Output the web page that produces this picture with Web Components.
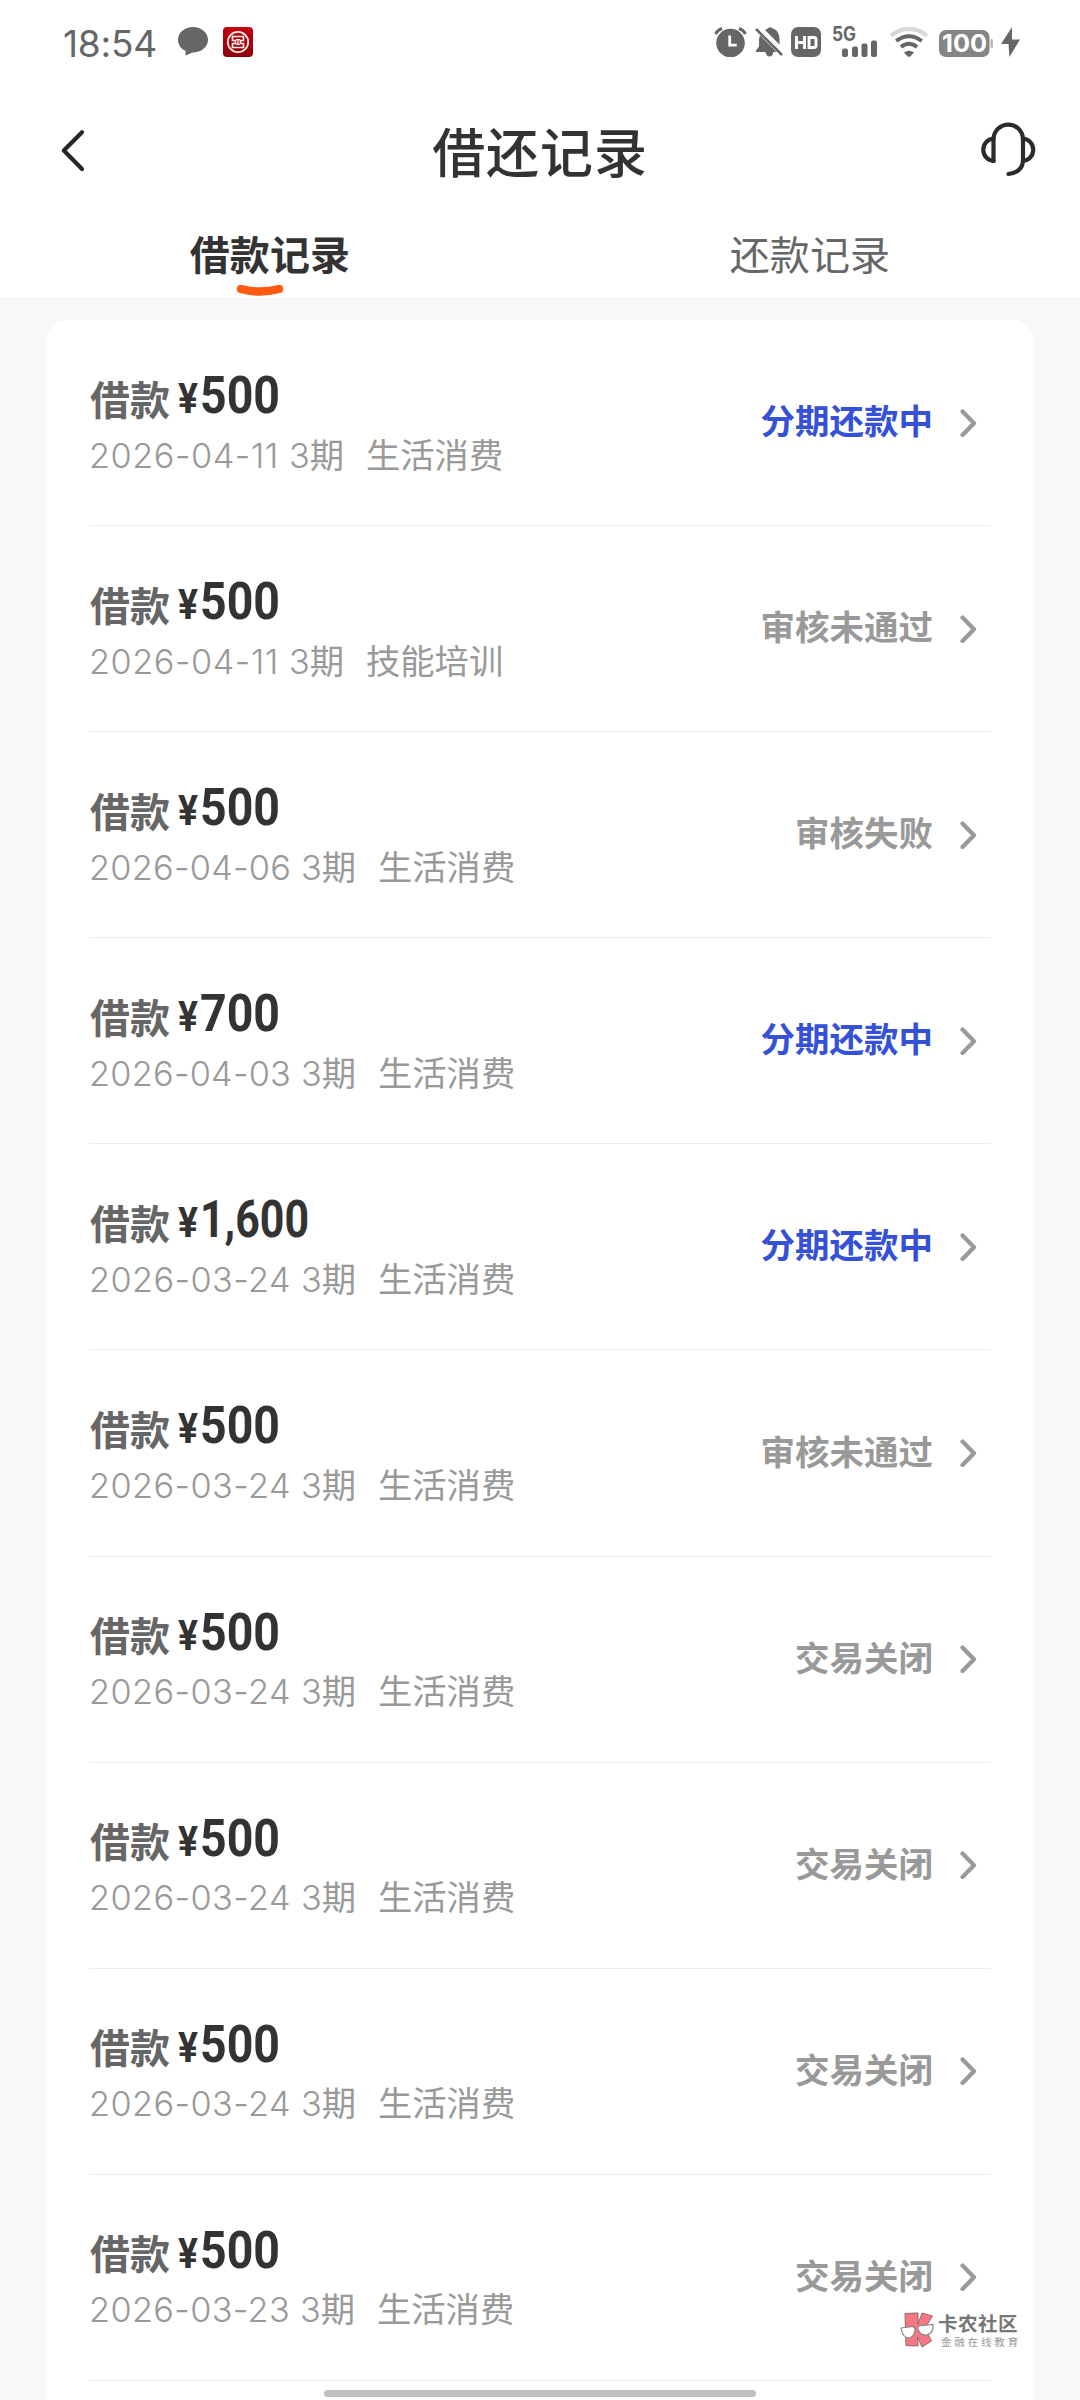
<!DOCTYPE html>
<html lang="zh-CN">
<head>
<meta charset="utf-8">
<title>借还记录</title>
<style>
html,body{margin:0;padding:0}
body{width:1080px;height:2400px;overflow:hidden;background:#f8f8f8;font-family:"Noto Sans CJK SC",sans-serif}
</style>
</head>
<body>
<loan-app></loan-app>
<script>
const define = (name, html, ready) => customElements.define(name, class extends HTMLElement {
  connectedCallback() {
    if (this.shadowRoot) return;
    const root = this.attachShadow({mode: 'open'});
    root.innerHTML = typeof html === 'function' ? html(this) : html;
    if (ready) ready(root, this);
  }
});

// Adjust letter spacing so that each [data-fit] run takes its nominal width.
const fit = root => root.querySelectorAll('[data-fit]').forEach(el => {
  const w = el.getBoundingClientRect().width;
  el.style.letterSpacing = ((+el.dataset.fit - w) / el.textContent.length) + 'px';
});

define('status-bar', `
<style>
:host{display:flex;justify-content:space-between;align-items:flex-start;height:84px;padding:27px 60px 0 63px;box-sizing:border-box;color:#666}
.l,.r{display:flex;align-items:flex-start}
.time{font:400 37px/34px Inter,sans-serif;white-space:nowrap;width:115px}
svg{display:block;flex:none}
</style>
<div class="l"><span class="time"><span data-fit="94">18:54</span></span>
<svg width="30" height="30" viewBox="0 0 30 30"><path fill="#666" d="M15 0C6.7 0 0 5.600 0 12.800 0 18 3 21.700 7.500 23.800L7.500 28.500 14.500 25.600C23.300 25.600 30 20 30 12.800 30 5.600 23.300 0 15 0Z"/></svg>
<svg style="margin-left:15px" width="30" height="30" viewBox="0 0 30 30"><defs><linearGradient id="g" x2="0" y2="1"><stop stop-color="#c40012"/><stop offset="1" stop-color="#8f000b"/></linearGradient></defs><rect width="30" height="30" rx="4" fill="url(#g)"/><circle cx="15" cy="15" r="10.200" fill="none" stroke="#ffeee6" stroke-width="1.800"/><path d="M9.500 9.500h11v4h-3v3h3v4h-11v-4h3v-3h-3Z" fill="none" stroke="#ffeee6" stroke-width="1.700"/><path d="M15 12.500v5M13 12.700h4M13 17.300h4" stroke="#ffeee6" stroke-width="1.300"/></svg></div>
<div class="r">
<svg width="33" height="30" viewBox="0 0 33 30"><circle cx="16.500" cy="16" r="14.300" fill="#666"/><path d="M1.500 7Q3.500 3 8 1.500M25 1.500Q29.500 3 31.500 7" fill="none" stroke="#666" stroke-width="3"/><path d="M15.700 8.500v9.700h7" fill="none" stroke="#fff" stroke-width="2.800"/></svg>
<svg style="margin-left:8px" width="30" height="30" viewBox="0 0 30 30"><path fill="#666" d="M11 2.500 15 0 18 1.500Q24.500 4 24.500 12V17.500L10 3ZM5 8.300 21.500 25H18.500Q17.500 29.500 14.500 29.500T10.500 25H1V23.500L4 19.500V12Z"/><path d="M1 2 27 28" stroke="#666" stroke-width="2.600"/></svg>
<svg style="margin-left:6px" width="30" height="30" viewBox="0 0 30 30"><rect width="30" height="30" rx="7" fill="#666"/><path d="M5.500 9v13M13.500 9v13M5.500 15.500h8M18 10.500h5Q25 10.500 25 12.500v6Q25 20.500 23 20.500h-5Z" fill="none" stroke="#fff" stroke-width="2.900"/></svg>
<svg style="margin-left:11px" width="45" height="30" viewBox="0 0 45 30" overflow="visible"><text x="0" y="14.300" font-family="Inter,sans-serif" font-weight="700" font-size="19.500" textLength="24" lengthAdjust="spacingAndGlyphs" fill="#666">5G</text><g fill="#666"><rect x="10" y="21.500" width="6" height="8.500" rx="2"/><rect x="20" y="19.500" width="6" height="10.500" rx="2"/><rect x="29.500" y="16.500" width="6" height="13.500" rx="2"/><rect x="39" y="13.500" width="6" height="16.500" rx="2"/></g></svg>
<svg style="margin-left:13px" width="38" height="30" viewBox="0 0 38 30"><g fill="none"><path d="M1 8.500Q19-5 37 8.500" stroke="#d9d9d9" stroke-width="4.500"/><path d="M6.200 14Q19 4.500 31.800 14" stroke="#666" stroke-width="4"/><path d="M11 20Q19 13.500 27 20" stroke="#666" stroke-width="4"/></g><path d="M14 25.500Q19 22 24 25.500L20.500 29.300Q19 30.300 17.500 29.300Z" fill="#666"/></svg>
<svg style="margin-left:11px" width="54" height="30" viewBox="0 0 54 30"><rect y="3" width="50.500" height="27" rx="7" fill="#858585"/><path d="M51.500 12h1.300q1.200 0 1.200 1.500v6q0 1.500-1.200 1.500h-1.300Z" fill="#b8b8b8"/><text x="3" y="25" font-family="Inter,sans-serif" font-weight="700" font-size="24.500" textLength="45" lengthAdjust="spacingAndGlyphs" fill="#fff">100</text></svg>
<svg style="margin-left:8px" width="19" height="30" viewBox="0 0 19 30"><path fill="#666" d="M11 0 0 17h7.500L8.500 30 19 12.500H11Z"/></svg>
</div>`, fit);

define('nav-bar', `
<style>
:host{display:grid;grid-template-columns:160px 1fr 160px;align-items:center;height:132px}
svg{display:block}
.back{padding-left:59px}.help{padding-left:60px}
h1{margin:0;font:500 53px/80px "Noto Sans CJK SC",sans-serif;letter-spacing:.9px;text-align:center;color:#333}
</style>
<svg class="back" width="28" height="48" viewBox="0 0 28 48"><path d="M23 6.300 4.800 24.500 23 43" fill="none" stroke="#262626" stroke-width="4.200" stroke-linecap="round" stroke-linejoin="round"/></svg>
<h1><slot></slot></h1>
<svg class="help" width="58" height="58" viewBox="0 0 58 58"><g fill="none" stroke="#2b2b2b" stroke-width="4.200" stroke-linecap="round" stroke-linejoin="round"><path d="M13.500 40V17.500A14.800 15.200 0 0 1 43 17.500V40Q42 51.500 28.500 53"/><path d="M13.500 17.500A11.300 11.300 0 0 0 13.500 40M43 17.500A11.300 11.300 0 0 1 43 40"/></g></svg>`);

define('record-tab', `
<style>
:host{display:flex;flex:1;flex-direction:column;align-items:center;color:#666;font:400 40px/60px "Noto Sans CJK SC",sans-serif}
:host([active]){color:#333;font-weight:700}
svg{display:none;margin:1px 20px 0 0}
:host([active]) svg{display:block}
</style><span data-fit="160.500"></span><svg width="48" height="13" viewBox="0 0 48 13"><path d="M5 5Q24 10 43 5" fill="none" stroke="#ff5a10" stroke-width="8.500" stroke-linecap="round"/></svg>`,
(r, h) => { r.querySelector('span').textContent = h.getAttribute('label'); fit(r); });

define('tab-strip', `<style>:host{display:flex;height:81px;padding-top:7px;box-sizing:border-box}</style><slot></slot>`);

define('loan-row', h => {
  const a = n => h.getAttribute(n);
  return `
<style>
:host{display:flex;justify-content:space-between;height:206.100px;box-sizing:border-box;border-bottom:1.500px solid #ececec}
.info{padding-top:42.500px}
.top{display:flex;align-items:baseline;height:70px;padding-left:1px;line-height:70px;white-space:nowrap}
.kind{font-size:40px;font-weight:700;color:#666;width:88px}
.yen,.amt{color:#333;font-family:Roboto,sans-serif;font-weight:700;position:relative;top:-1.500px}
.yen{font-size:42px;width:22px}.amt{font-size:52px}
.yen span,.amt span{display:inline-block;transform-origin:0 50%}
.sub{display:flex;align-items:baseline;height:50px;line-height:50px;margin-top:-5px;color:#999;font-size:34.300px;white-space:nowrap}
.date,.n{font-family:Inter,"Noto Sans CJK SC",sans-serif;font-weight:350;white-space:pre}
.term{width:77px}
.end{display:flex;align-items:center;padding-right:14px;gap:27px}
.state{font-size:34.500px;font-weight:700;line-height:50px;color:#999;margin-top:-7px}
.state.on{color:#3551d8}
svg{display:block}
</style>
<div class="info"><div class="top"><span class="kind">借款</span><span class="yen"><span data-wide="20">¥</span></span><span class="amt"><span data-wide="${a('amount').length > 3 ? 109 : 80}">${a('amount')}</span></span></div>
<div class="sub"><span class="date" data-fit="${a('dw') || 212}">${a('date')} </span><span class="term"><span class="n">3</span>期</span><span>${a('use')}</span></div></div>
<div class="end"><span class="state ${a('state') === '分期还款中' ? 'on' : ''}">${a('state')}</span><svg width="17" height="28" viewBox="0 0 17 28"><path d="M2.500 2.500 14 14.300 2.500 26" fill="none" stroke="#999" stroke-width="4.200" stroke-linecap="round" stroke-linejoin="round"/></svg></div>`;
}, r => {
  fit(r);
  r.querySelectorAll('[data-wide]').forEach(e => { e.style.transform = `scaleX(${+e.dataset.wide / e.getBoundingClientRect().width})`; });
});

define('record-card', `<style>:host{display:block;margin:23px 46px 0;padding:0 43px;height:2100px;border-radius:22px;background:#fff;box-sizing:border-box}</style><slot></slot>`);

define('site-mark', `
<style>
:host{position:absolute;left:900px;top:2312px;display:flex;gap:3px;white-space:nowrap}
svg{display:block}
.t{display:flex;flex-direction:column}
b{font-size:19.500px;line-height:22px;color:#777;font-weight:700}
small{font-size:10.500px;line-height:13px;color:#999;padding-left:3px;margin-top:1px}
</style>
<svg width="35" height="36" viewBox="0 0 35 36"><path d="M5 1.500 18 1 18 12 22 1 32.500 4 25 16 31.500 29 22 35 17.500 25 18 34 6 33.500Z" fill="#f97784" stroke="#8b6a6d" stroke-width="1"/><path d="M1 16 13 14.500 15 16.500Q15 24 9.500 26 3 26 1.500 18ZM17.500 16 18.500 14 33 12.500Q34 21 26.500 23 19.500 23.500 17.500 16Z" fill="#fff" stroke="#888" stroke-width="1.200"/></svg>
<div class="t"><b><span data-fit="80">卡农社区</span></b><small><span data-fit="80">金融在线教育</span></small></div>`, fit);

define('home-pill', `<style>:host{position:absolute;left:324px;top:2390px;width:432px;height:7px;border-radius:4px;background:#c0c0c0}</style>`);

define('loan-app', `
<style>:host{display:block;position:relative;width:1080px;height:2400px;overflow:hidden;background:#f8f8f8}header{background:#fff;height:297px}</style>
<header><status-bar></status-bar><nav-bar>借还记录</nav-bar>
<tab-strip><record-tab active label="借款记录"></record-tab><record-tab label="还款记录"></record-tab></tab-strip></header>
<record-card>
<loan-row amount="500" date="2026-04-11" dw="200" use="生活消费" state="分期还款中"></loan-row>
<loan-row amount="500" date="2026-04-11" dw="200" use="技能培训" state="审核未通过"></loan-row>
<loan-row amount="500" date="2026-04-06" use="生活消费" state="审核失败"></loan-row>
<loan-row amount="700" date="2026-04-03" use="生活消费" state="分期还款中"></loan-row>
<loan-row amount="1,600" date="2026-03-24" use="生活消费" state="分期还款中"></loan-row>
<loan-row amount="500" date="2026-03-24" use="生活消费" state="审核未通过"></loan-row>
<loan-row amount="500" date="2026-03-24" use="生活消费" state="交易关闭"></loan-row>
<loan-row amount="500" date="2026-03-24" use="生活消费" state="交易关闭"></loan-row>
<loan-row amount="500" date="2026-03-24" use="生活消费" state="交易关闭"></loan-row>
<loan-row amount="500" date="2026-03-23" dw="211" use="生活消费" state="交易关闭"></loan-row>
</record-card>
<site-mark></site-mark><home-pill></home-pill>`);
</script>
</body>
</html>
